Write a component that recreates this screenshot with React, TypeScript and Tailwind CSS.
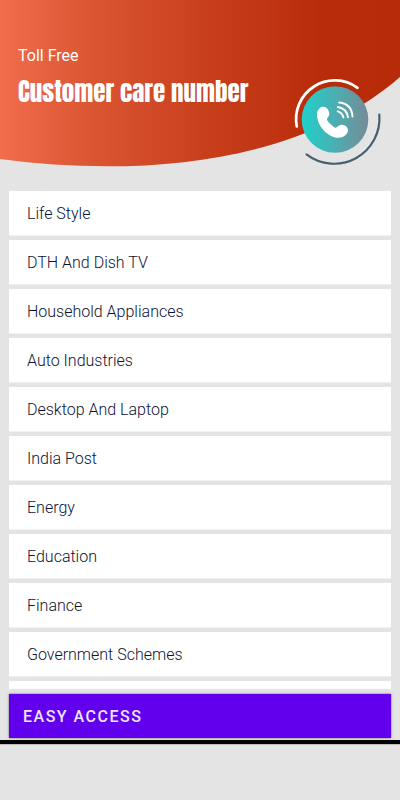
import React from 'react'

const categories = [
  'Life Style',
  'DTH And Dish TV',
  'Household Appliances',
  'Auto Industries',
  'Desktop And Laptop',
  'India Post',
  'Energy',
  'Education',
  'Finance',
  'Government Schemes',
]

function HeaderBackground() {
  return (
    <svg
      className="absolute inset-x-0 top-0 w-full h-44"
      viewBox="0 0 400 176"
      preserveAspectRatio="none"
      aria-hidden="true"
    >
      <defs>
        <linearGradient id="header-fill" x1="0" x2="1" y1="0" y2="0">
          <stop offset="0" stopColor="#f26d4b" />
          <stop offset="0.2" stopColor="#dd5835" />
          <stop offset="0.5" stopColor="#c9401d" />
          <stop offset="0.8" stopColor="#b92c0a" />
          <stop offset="1" stopColor="#b72b09" />
        </linearGradient>
      </defs>
      <path d="M0 0H400V77C305 160 150 179 0 159Z" fill="url(#header-fill)" />
    </svg>
  )
}

function CallBadge() {
  return (
    <svg className="absolute right-4 top-[75px] w-[92px] h-[92px]" viewBox="0 0 92 92" fill="none" aria-hidden="true">
      <defs>
        <linearGradient id="badge-fill" x1="0" x2="1" y1="0" y2="0">
          <stop offset="0" stopColor="#1fd1cb" />
          <stop offset="1" stopColor="#778b98" />
        </linearGradient>
      </defs>
      <circle cx="43" cy="44.5" r="33.3" fill="url(#badge-fill)" />
      <g strokeLinecap="round">
        <path d="M4.8 51.5A38.7 38.7 0 0 1 65.5 12.8" stroke="#fff" strokeWidth="2.7" />
        <path d="M87.3 39.5A45.3 45.3 0 0 1 14.5 79.3" stroke="#45606f" strokeWidth="2.2" />
        <path d="M45.8 36.4C48.7 37.3 50.7 39.3 51.4 42.4" stroke="#fff" strokeWidth="2" />
        <path d="M45.8 31.9C51.4 32.9 55.2 36.6 56 42.2" stroke="#fff" strokeWidth="2" />
        <path d="M47.2 27.6C55.1 28.6 60 33.6 60.5 41.4" stroke="#fff" strokeWidth="2" />
      </g>
      <path
        d="M27.5 33.2C30 31 34 31.4 35.9 34.4C37.8 37.4 37.8 40 36.1 41.9C34.5 43.8 34.6 45 36.6 47.2L41.2 51.4C43.3 53.2 44.3 53 45.8 51.6C48.3 49.1 52.1 49.2 54.6 51.8C56.4 53.9 56.6 56.9 54.4 59.3C51.4 62.5 47.5 63.6 42.3 62.3C33.2 59.2 26.4 51 25.1 42C24.7 38.2 25.1 35.4 27.5 33.2Z"
        fill="#fff"
      />
    </svg>
  )
}

export default function App() {
  return (
    <div className="min-h-screen bg-[#e4e4e4] font-[Roboto,sans-serif] text-[#0c1333]">
      <header className="relative h-[191px] px-[18px] pt-11 text-white">
        <HeaderBackground />
        <div className="relative">
          <p className="text-base leading-6">Toll Free</p>
          <h1 className="mt-2 text-[25px] leading-8 font-normal font-['Anton','Roboto_Condensed',sans-serif]">
            Customer care number
          </h1>
        </div>
        <CallBadge />
      </header>

      <main className="px-[9px]">
        <ul className="flex flex-col gap-1">
          {categories.map((name) => (
            <li key={name}>
              <button
                type="button"
                className="block w-full h-[45px] px-[18px] pt-[2px] bg-white border-b border-[#f1f1f1] text-left text-base font-light"
              >
                {name}
              </button>
            </li>
          ))}
          {/* next row, cut off by the bottom button */}
          <li className="h-2 bg-white" />
        </ul>
        <button
          type="button"
          className="block w-full h-11 mt-[5px] pt-[2px] px-[14px] bg-[#6200ee] text-[#ece4fc] text-left text-base font-medium tracking-[1.5px] uppercase shadow-[0_0_2px_rgba(0,0,0,0.6)]"
        >
          Easy Access
        </button>
      </main>
      <div className="mt-[2px] h-1 bg-black shadow-[0_1px_0_#bbb]" />
    </div>
  )
}
